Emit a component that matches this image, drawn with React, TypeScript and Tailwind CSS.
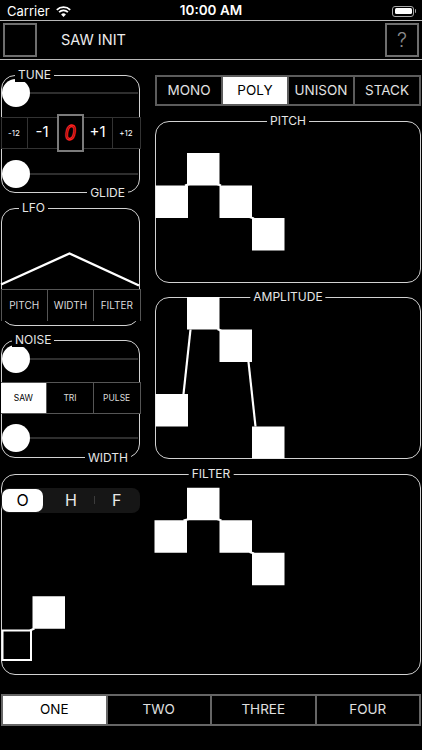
import React from "react";

// panel frame used by every rounded group box
const FRAME = "relative border-[1.5px] border-[#d2d2d2] rounded-[14px]";

function Legend({ children, className }: { children: React.ReactNode; className: string }) {
  return (
    <span className={`absolute px-[3px] bg-black text-[12px] leading-[14px] text-[#e6e6e6] ${className}`}>
      {children}
    </span>
  );
}

function Slider({ className }: { className: string }) {
  return (
    <div className={`flex items-center ${className}`}>
      <div className="w-[28px] h-[28px] rounded-full bg-white shrink-0 -ml-[0.5px]" />
      <div className="flex-1 h-[2px] bg-[#2e2e2e] mr-[1.5px]" />
    </div>
  );
}

function StatusBar() {
  return (
    <div className="h-[20px] grid grid-cols-[1fr_auto_1fr] items-center px-[7px] text-white text-[13px] pt-[2px]">
      <div className="flex items-center">
        <span className="leading-none">Carrier</span>
        <svg className="ml-[6px]" width="15" height="11" viewBox="0 0 15 11" fill="none">
          <path d="M7.5 11 L5.1 8.5 A3.4 3.4 0 0 1 9.9 8.5 Z" fill="white" />
          <path d="M3.1 6.2 A6.3 6.3 0 0 1 11.9 6.2" stroke="white" strokeWidth="1.8" />
          <path d="M0.8 3.8 A9.6 9.6 0 0 1 14.2 3.8" stroke="white" strokeWidth="1.8" />
        </svg>
      </div>
      <span className="font-semibold text-[13.5px] leading-none">10:00 AM</span>
      <div className="flex items-center justify-end mr-[-1px]">
        <div className="w-[22px] h-[11px] rounded-[3px] border border-[#a8a8a8] p-[1.5px]">
          <div className="w-full h-full rounded-[1.5px] bg-white" />
        </div>
        <div className="w-[1.5px] h-[4px] rounded-r-[1px] bg-[#a8a8a8] ml-[0.5px]" />
      </div>
    </div>
  );
}

function Header() {
  return (
    <div className="h-[40px] border-y border-[#b8b8b8] flex items-center px-[3px]">
      <div className="w-[34px] h-[34px] border-2 border-[#6e6e6e]" />
      <span className="ml-[24px] text-[14.5px] text-[#ececec]">SAW INIT</span>
      <div className="ml-auto w-[34px] h-[34px] border-2 border-[#6e6e6e] flex items-center justify-center text-[#8a8a8a] text-[20px] font-light">
        ?
      </div>
    </div>
  );
}

function TunePanel() {
  return (
    <div className={`${FRAME} h-[118px] flex flex-col`}>
      <Legend className="-top-[8px] left-[13px]">TUNE</Legend>
      <Slider className="h-[34px]" />
      <div className="-mx-[1.5px] mt-[6.5px] h-[32px] flex border-y border-x border-[#333] bg-black text-white">
        <div className="w-[26px] border-r border-[#333] flex items-center justify-center text-[8px]">-12</div>
        <div className="w-[29px] flex items-center justify-center text-[15px]">-1</div>
        <div className="w-[27px] -my-[4px] border-2 border-[#7b7b7b] bg-black flex items-center justify-center">
          <span className="font-['Liberation_Sans',sans-serif] italic text-[19px] leading-none scale-y-[1.2] text-transparent [-webkit-text-stroke:1.1px_#ff2020]">
            0
          </span>
        </div>
        <div className="w-[29px] border-r border-[#333] flex items-center justify-center text-[15px]">+1</div>
        <div className="flex-1 flex items-center justify-center text-[8px]">+12</div>
      </div>
      <Slider className="h-[34px] mt-[8px]" />
      <Legend className="-bottom-[8px] right-[11px]">GLIDE</Legend>
    </div>
  );
}

function LfoPanel() {
  return (
    <div className={`${FRAME} h-[118px] flex flex-col`}>
      <Legend className="-top-[8px] left-[17px]">LFO</Legend>
      <svg width="136" height="80.5" className="overflow-visible shrink-0">
        <polyline points="-1,75.5 67.5,44.5 137,76.5" fill="none" stroke="white" strokeWidth="2.4" />
      </svg>
      <div className="-mx-[1.5px] h-[32px] flex border-t-[1.5px] border-x-[1.5px] border-[#555] bg-black text-[10px] text-[#dcdcdc]">
        <div className="flex-1 flex items-center justify-center">PITCH</div>
        <div className="flex-1 flex items-center justify-center border-l-[1.5px] border-[#555]">WIDTH</div>
        <div className="flex-1 flex items-center justify-center border-l-[1.5px] border-[#555]">FILTER</div>
      </div>
    </div>
  );
}

function NoisePanel() {
  return (
    <div className={`${FRAME} h-[118px] flex flex-col`}>
      <Legend className="-top-[8px] left-[10px]">NOISE</Legend>
      <Slider className="h-[35px]" />
      <div className="-mx-[1.5px] mt-[6px] h-[32px] flex border-y-[1.5px] border-r-[1.5px] border-[#555] bg-black text-[8.5px] text-[#dcdcdc]">
        <div className="flex-1 flex items-center justify-center bg-white text-black">SAW</div>
        <div className="flex-1 flex items-center justify-center border-l-[1.5px] border-[#555]">TRI</div>
        <div className="flex-1 flex items-center justify-center border-l-[1.5px] border-[#555]">PULSE</div>
      </div>
      <Slider className="h-[34px] mt-[6.5px]" />
      <Legend className="-bottom-[8px] right-[8px]">WIDTH</Legend>
    </div>
  );
}

function ModeBar() {
  const modes = ["MONO", "POLY", "UNISON", "STACK"];
  return (
    <div className="h-[31px] flex border-2 border-[#5c5c5c] text-[13.5px] text-[#e2e2e2]">
      {modes.map((m, i) => (
        <div
          key={m}
          className={`flex-1 flex items-center justify-center ${i > 0 ? "border-l-2 border-[#5c5c5c]" : ""} ${
            m === "POLY" ? "bg-white text-black" : ""
          }`}
        >
          {m}
        </div>
      ))}
    </div>
  );
}

const S = 32.5;

function PitchPanel() {
  return (
    <div className={`${FRAME} h-[162px] mt-[15px]`}>
      <Legend className="-top-[8px] left-1/2 -translate-x-1/2">PITCH</Legend>
      <svg width="263" height="159" className="overflow-visible block">
        <rect x="-0.5" y="63.5" width={S} height={S} fill="white" />
        <rect x="31" y="31" width={S} height={S} fill="white" />
        <rect x="63.5" y="63.5" width={S} height={S} fill="white" />
        <rect x="96" y="96" width={S} height={S} fill="white" />
        <line x1="29" y1="63.5" x2="33.5" y2="62" stroke="white" strokeWidth="2" />
        <line x1="61" y1="62" x2="65" y2="63.5" stroke="white" strokeWidth="2" />
        <line x1="93.5" y1="95" x2="98" y2="96.5" stroke="white" strokeWidth="2" />
      </svg>
    </div>
  );
}

function AmplitudePanel() {
  return (
    <div className={`${FRAME} h-[162px] mt-[13.5px]`}>
      <Legend className="-top-[8px] left-1/2 -translate-x-1/2">AMPLITUDE</Legend>
      <svg width="263" height="159" className="overflow-visible block">
        <rect x="-0.5" y="96" width={S} height={S} fill="white" />
        <rect x="31" y="-1" width={S} height={S} fill="white" />
        <rect x="63.5" y="31.5" width={S} height={S} fill="white" />
        <rect x="96" y="128.5" width={S} height="32" fill="white" />
        <line x1="27.5" y1="96" x2="34.5" y2="31.5" stroke="white" strokeWidth="2.2" />
        <line x1="61.5" y1="31" x2="65.5" y2="33" stroke="white" strokeWidth="2.2" />
        <line x1="92.5" y1="64" x2="99.5" y2="128.5" stroke="white" strokeWidth="2.2" />
      </svg>
    </div>
  );
}

function FilterPanel() {
  return (
    <div className={`${FRAME} h-[201.5px] w-[420px] ml-[1px] mt-[15px]`}>
      <Legend className="-top-[8px] left-1/2 -translate-x-1/2">FILTER</Legend>
      <svg width="417" height="198.5" className="overflow-visible block">
        <rect x="152.5" y="45.25" width={S} height={S} fill="white" />
        <rect x="185" y="12.75" width={S} height={S} fill="white" />
        <rect x="217.5" y="45.25" width={S} height={S} fill="white" />
        <rect x="250" y="77.75" width={S} height={S} fill="white" />
        <rect x="30.5" y="121.25" width={S} height={S} fill="white" />
        <rect x="0.5" y="155.5" width="28.5" height="29.5" fill="none" stroke="white" strokeWidth="2" />
        <line x1="181.5" y1="45.5" x2="187" y2="44" stroke="white" strokeWidth="2" />
        <line x1="215" y1="44" x2="219.5" y2="45.5" stroke="white" strokeWidth="2" />
        <line x1="247.5" y1="77" x2="252" y2="78.5" stroke="white" strokeWidth="2" />
        <line x1="28" y1="155.5" x2="32.5" y2="153.5" stroke="white" strokeWidth="2" />
      </svg>
      <div className="absolute -left-[1px] top-[13.5px] w-[138.5px] h-[24.5px] rounded-[8px] bg-[#161616] flex items-center p-[1px] text-[16px]">
        <div className="w-[46px] h-full">
          <div className="w-[41px] h-full rounded-[7px] bg-white text-black flex items-center justify-center">O</div>
        </div>
        <div className="w-[46px] h-full flex items-center justify-center text-[#e8e8e8]">H</div>
        <div className="w-[1px] h-[8px] bg-[#3c3c3c]" />
        <div className="flex-1 h-full flex items-center justify-center text-[#e8e8e8]">F</div>
      </div>
    </div>
  );
}

function Tabs() {
  const tabs = ["ONE", "TWO", "THREE", "FOUR"];
  return (
    <div className="mt-[18.5px] ml-[1px] w-[420px] h-[32px] flex border-2 border-[#666] text-[13.5px] text-[#e0e0e0]">
      {tabs.map((t, i) => (
        <div
          key={t}
          className={`flex-1 flex items-center justify-center ${i > 0 ? "border-l-2 border-[#666]" : ""} ${
            i === 0 ? "bg-white text-black" : ""
          }`}
        >
          {t}
        </div>
      ))}
    </div>
  );
}

export default function App() {
  return (
    <div className="w-[422px] h-[750px] bg-black text-white overflow-hidden font-['Inter','Noto_Sans',sans-serif]">
      <StatusBar />
      <Header />
      <div className="flex mt-[15px] pl-[1px]">
        <div className="w-[139px] flex flex-col gap-[14.5px]">
          <TunePanel />
          <LfoPanel />
          <NoisePanel />
        </div>
        <div className="w-[266px] ml-[15px] flex flex-col">
          <ModeBar />
          <PitchPanel />
          <AmplitudePanel />
        </div>
      </div>
      <FilterPanel />
      <Tabs />
    </div>
  );
}
